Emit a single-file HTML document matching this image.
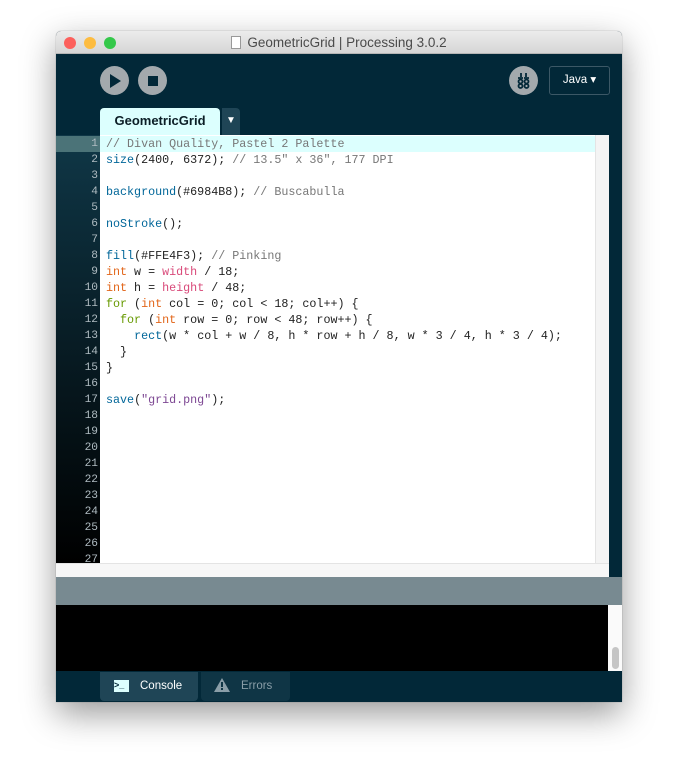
<!DOCTYPE html>
<html><head><style>
*{margin:0;padding:0;box-sizing:border-box}
body{width:678px;height:783px;background:#fff;position:relative;overflow:hidden;font-family:"Liberation Sans",sans-serif}
.win{position:absolute;left:56px;top:31px;width:566px;height:671px;background:#022838;box-shadow:0 12px 34px rgba(0,0,0,.4),0 0 1px rgba(0,0,0,.4);border-radius:5px 5px 0 0;overflow:hidden}
.title{position:absolute;left:0;top:0;width:566px;height:23px;background:linear-gradient(#ececec,#d6d6d6);border-bottom:1px solid #b5b5b5;text-align:center;font-size:13.5px;color:#4a4a4a;line-height:23px}
.dot{position:absolute;top:6px;width:12px;height:12px;border-radius:50%}
.btn{position:absolute;border-radius:50%;background:#a3a9ad}
.code{position:absolute;font-family:"Liberation Mono",monospace;font-size:11.7px;line-height:16px;white-space:pre;color:#222}
.c{color:#777}.f{color:#006699}.k{color:#e2661a}.p{color:#d94a7a}.s{color:#7d4793}.g{color:#669900}
.ln{position:absolute;left:0;width:42px;text-align:right;font-family:"Liberation Mono",monospace;font-size:11.2px;line-height:16px;color:#b0bcc2;white-space:pre}
</style></head><body>
<div class="win">
 <div class="title"><span style="display:inline-block;width:10px;height:13px;border:1px solid #999;background:#fff;vertical-align:-2px;margin-right:6px"></span>GeometricGrid | Processing 3.0.2</div>
 <div class="dot" style="left:8px;background:#fc605c"></div>
 <div class="dot" style="left:28px;background:#fdbc40"></div>
 <div class="dot" style="left:48px;background:#34c84a"></div>
 <div class="btn" style="left:44px;top:35px;width:29px;height:29px"></div>
 <svg style="position:absolute;left:53px;top:43px" width="13" height="14"><path d="M1 0L12 7L1 14Z" fill="#022838"/></svg>
 <div class="btn" style="left:82px;top:35px;width:29px;height:29px"></div>
 <div style="position:absolute;left:92px;top:45px;width:10px;height:10px;background:#022838"></div>
 <div class="btn" style="left:453px;top:35px;width:29px;height:29px"></div>
 <svg style="position:absolute;left:459px;top:41px" width="17" height="17" fill="none" stroke="#022838" stroke-width="1.8"><path d="M6 1V5M11 1V5M3 6H8M9 6H14"/><circle cx="5.5" cy="9.5" r="2"/><circle cx="11.5" cy="9.5" r="2"/><circle cx="5.5" cy="14" r="2"/><circle cx="11.5" cy="14" r="2"/></svg>
 <div style="position:absolute;left:493px;top:35px;width:61px;height:29px;border:1px solid #3c5866;border-radius:3px;color:#fff;font-size:11.5px;text-align:center;line-height:27px">Java ▾</div>
 <div style="position:absolute;left:44px;top:77px;width:120px;height:27px;background:#dcfffe;border-radius:4px 4px 0 0;font-weight:bold;font-size:13px;color:#0b1e26;text-align:center;line-height:25px">GeometricGrid</div>
 <div style="position:absolute;left:166px;top:77px;width:18px;height:27px;background:#1f4556;border-radius:0 4px 0 0;color:#fff;font-size:10px;text-align:center;line-height:25px">▼</div>
 <div style="position:absolute;left:0;top:104px;width:44px;height:428px;background:linear-gradient(#0f3747,#000)"></div>
 <div style="position:absolute;left:0;top:105px;width:44px;height:16px;background:#4b7378"></div>
 <div style="position:absolute;left:44px;top:104px;width:509px;height:442px;background:#fff"></div>
 <div style="position:absolute;left:44px;top:105px;width:495px;height:16px;background:#dcfffe"></div>
 <div style="position:absolute;left:539px;top:104px;width:14px;height:428px;background:#f4f4f4;border-left:1px solid #e4e4e4"></div>
 <div style="position:absolute;left:0;top:532px;width:553px;height:14px;background:#f7f7f7;border-top:1px solid #e4e4e4"></div>
 <div class="ln" style="top:105px">1
2
3
4
5
6
7
8
9
10
11
12
13
14
15
16
17
18
19
20
21
22
23
24
25
26
27</div>
 <div style="position:absolute;left:0;top:532px;width:44px;height:14px;background:#f7f7f7;border-top:1px solid #e4e4e4"></div>
 <div class="code" style="left:50px;top:105px"><span class="c">// Divan Quality, Pastel 2 Palette</span>
<span class="f">size</span>(2400, 6372); <span class="c">// 13.5" x 36", 177 DPI</span>

<span class="f">background</span>(#6984B8); <span class="c">// Buscabulla</span>

<span class="f">noStroke</span>();

<span class="f">fill</span>(#FFE4F3); <span class="c">// Pinking</span>
<span class="k">int</span> w = <span class="p">width</span> / 18;
<span class="k">int</span> h = <span class="p">height</span> / 48;
<span class="g">for</span> (<span class="k">int</span> col = 0; col &lt; 18; col++) {
  <span class="g">for</span> (<span class="k">int</span> row = 0; row &lt; 48; row++) {
    <span class="f">rect</span>(w * col + w / 8, h * row + h / 8, w * 3 / 4, h * 3 / 4);
  }
}

<span class="f">save</span>(<span class="s">"grid.png"</span>);</div>
 <div style="position:absolute;left:0;top:546px;width:566px;height:28px;background:#788a91"></div>
 <div style="position:absolute;left:0;top:574px;width:566px;height:66px;background:#000"></div>
 <div style="position:absolute;left:552px;top:574px;width:14px;height:66px;background:#fafafa"></div>
 <div style="position:absolute;left:556px;top:616px;width:7px;height:22px;background:#c5c5c5;border-radius:4px"></div>
 <div style="position:absolute;left:44px;top:641px;width:98px;height:29px;background:#1f4556;border-radius:0 0 4px 4px;color:#fff;font-size:11.5px;line-height:28px;padding-left:40px">Console</div>
 <div style="position:absolute;left:58px;top:649px;width:15px;height:12px;background:#dcfffe;font-size:9px;font-weight:bold;color:#022838;line-height:10px">&gt;_</div>
 <div style="position:absolute;left:145px;top:641px;width:89px;height:29px;background:#0f3545;border-radius:0 0 4px 4px;color:#8a9ea8;font-size:11.5px;line-height:28px;padding-left:40px">Errors</div>
 <svg style="position:absolute;left:158px;top:647px" width="16" height="14"><path d="M8 0L16 14H0Z" fill="#8a9ea8"/><rect x="7" y="4" width="2" height="5" fill="#0f3545"/><rect x="7" y="10" width="2" height="2" fill="#0f3545"/></svg>
</div>
</body></html>
